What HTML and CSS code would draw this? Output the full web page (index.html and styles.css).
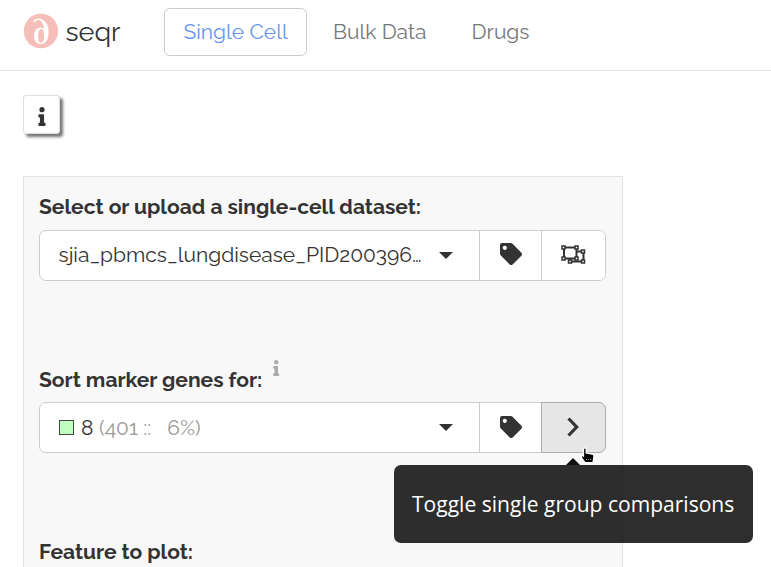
FILE: index.html
```
<!DOCTYPE html>
<html lang="en">
<head>
<meta charset="utf-8">
<title>seqr</title>
<link rel="stylesheet" href="styles.css">
</head>
<body>
<svg class="defs" width="0" height="0">
  <symbol id="info" viewBox="0 0 192 512"><path d="M20 424.229h20V279.771H20c-11.046 0-20-8.954-20-20V212c0-11.046 8.954-20 20-20h112c11.046 0 20 8.954 20 20v212.229h20c11.046 0 20 8.954 20 20V492c0 11.046-8.954 20-20 20H20c-11.046 0-20-8.954-20-20v-47.771c0-11.046 8.954-20 20-20zM96 0C56.235 0 24 32.235 24 72s32.235 72 72 72 72-32.235 72-72S135.764 0 96 0z"/></symbol>
  <symbol id="tag" viewBox="0 0 512 512"><path d="M0 252.118V48C0 21.49 21.49 0 48 0h204.118a48 48 0 0 1 33.941 14.059l211.882 211.882c18.745 18.745 18.745 49.137 0 67.882L293.823 497.941c-18.745 18.745-49.137 18.745-67.882 0L14.059 286.059A48 48 0 0 1 0 252.118zM112 64c-26.51 0-48 21.49-48 48s21.49 48 48 48 48-21.49 48-48-21.49-48-48-48z"/></symbol>
</svg>
<nav class="navbar">
  <a class="brand">
    <svg class="logo" viewBox="0 0 36 36"><circle cx="18" cy="18" r="17.2" fill="#f6beb8"/><path d="M10.2 8.500C11.500 5 16 4.800 19 6.400C24 9 26 14 25.500 20C25.200 27 22.500 31 17.800 31C13.500 31 11 27.500 11 23C11 18 13.700 14.500 17.500 14.500C19 14.500 20.200 15 21 16C20.500 11 18.500 7.300 15.500 7.100C14 7 13.200 7.900 12.300 8.800C11.500 9.600 10.300 9.500 10.200 8.500ZM18.200 16C16.200 16 15.300 18.500 15.300 23C15.300 27.500 16 29.700 18 29.700C20.300 29.700 21 27 21 22.500C21 18 20.300 16 18.200 16Z" fill="#fff" fill-rule="evenodd"/></svg>
    <span class="brand-name">seqr</span>
  </a>
  <a class="tab active"><span>Single Cell</span></a>
  <a class="tab bulk"><span>Bulk Data</span></a>
  <a class="tab drugs"><span>Drugs</span></a>
</nav>
<main>
  <button class="info-btn"><svg width="8" height="19"><use href="#info"/></svg></button>
  <section class="panel">
    <div class="field">
      <label><span>Select or upload a single-cell dataset:</span></label>
      <div class="group">
        <div class="select"><span class="value">sjia_pbmcs_lungdisease_PID200396…</span><i class="caret"></i></div>
        <button class="addon"><svg width="22" height="22"><use href="#tag"/></svg></button>
        <button class="addon last"><svg class="line" width="25" height="19" viewBox="0 0 25 19" stroke-width="2"><path d="M3 2.500H15.500V13.500H3ZM15.500 6.500H22.500V16.500H9V13.500"/><g class="handles" stroke-width="1.500"><path d="M1 1H4V4H1ZM14 1H17V4H14ZM1 12H4V15H1ZM14 12H17V15H14ZM20.500 5H23.500V8H20.500ZM20.500 15H23.500V18H20.500ZM7.500 15H10.500V18H7.500Z"/></g></svg></button>
      </div>
    </div>
    <div class="field sort">
      <label><span>Sort marker genes for:</span><svg class="hint" width="6.500" height="16"><use href="#info"/></svg></label>
      <div class="group">
        <div class="select"><span class="swatch"></span><span class="eight">8</span><span class="muted">(401 ::</span><span class="muted pct">6%)</span><i class="caret"></i></div>
        <button class="addon"><svg width="22" height="22"><use href="#tag"/></svg></button>
        <button class="addon last hover"><svg class="line" width="12" height="20" viewBox="0 0 12 20" stroke-width="3.200"><path d="M1.500 1.500L9.700 10L1.500 18.500"/></svg></button>
        <div class="tooltip"><span>Toggle single group comparisons</span></div>
        <svg class="cursor" width="16" height="18" viewBox="0 0 16 18"><path d="M3.500 2C3.500 .6 6.200 .6 6.200 2V6L12.500 7.200C13.600 7.500 14 8.200 14 9.200L13 15.700H5L1.500 10.500C1 8.500 2.500 8 3.500 9Z" fill="#000" stroke="#fff" stroke-width="1.300"/><path d="M6 12.500H12" stroke="#999" stroke-dasharray="1 1"/></svg>
      </div>
    </div>
    <div class="field">
      <label><span>Feature to plot:</span></label>
    </div>
  </section>
</main>
</body>
</html>
```
FILE: styles.css
```
* { box-sizing: border-box; }
body { margin: 0; height: 567px; overflow: hidden; background: #fff; color: #333; font: 21px/30px Raleway, Lato, sans-serif; }
span { white-space: pre; }
svg { display: block; flex: none; fill: #333; }
.defs { position: absolute; }
.navbar { display: flex; align-items: flex-start; height: 71px; padding: 8px 0 0 23px; border-bottom: 1px solid #e2e2e2; }
.brand { display: flex; width: 141px; height: 48px; align-items: center; }
.logo { width: 36px; height: 36px; margin-top: -2px; }
.brand-name { margin-left: 6.500px; font-size: 27px; }
.tab { height: 48px; padding: 8px 0 0 18px; border: 1px solid transparent; color: #777; }
.active { width: 143px; padding-left: 18.500px; border-color: #ccc; border-radius: 6px; color: #6495ed; }
.bulk { width: 138.500px; margin-left: 7px; }
.info-btn { display: flex; align-items: center; justify-content: center; width: 37px; height: 39px; margin: 24px 0 0 23px; padding: 3px 0 0; background: #fff; border: 1px solid #ddd; border-radius: 3px; box-shadow: 3px 3px 3px #777; }
.panel { width: 600px; height: 391px; margin: 42px 0 0 23px; padding: 15px 15px 0; background: #f8f8f8; border: 1px solid #e3e3e3; border-bottom: 0; }
.field { height: 173px; }
.field:last-child { height: 30px; }
.sort { height: 172px; }
.sort label { height: 37px; }
.sort .select { padding-bottom: 0; }
.sort .addon { padding-bottom: 2px; }
label { display: flex; height: 38px; font-weight: 700; }
.hint { margin: -5px 0 0 11px; fill: #aaa; }
.group { position: relative; display: flex; width: 567px; height: 51px; border: 1px solid #ccc; border-radius: 7px; background: #fff; }
.select { display: flex; align-items: center; width: 439px; padding: 0 0 1px 18.500px; }
.caret { margin: 0 26.500px 0 auto; border: solid transparent; border-width: 7px 7px 0; border-top-color: #333; }
.sort .caret { margin-bottom: 1px; }
.addon { display: flex; align-items: center; justify-content: center; width: 62px; padding: 0 0 3px; background: #fff; border: 0; border-left: 1px solid #ccc; }
.last { width: 64px; padding-right: 1px; border-radius: 0 6px 6px 0; }
.sort .hover { width: 65px; height: 51px; margin: -1px -1px 0 0; padding: 0 1px 1px 0; background: #e6e6e6; border: 1px solid #adadad; border-radius: 0 7px 7px 0; }
.line { fill: none; stroke: #333; }
.handles { fill: #fff; }
.swatch { width: 15px; height: 15px; margin-left: .5px; background: #bfffbf; border: 1px solid #444; }
.eight { width: 18px; margin-left: 7px; }
.muted { color: #999; }
.pct { margin-left: 16px; }
.tooltip { position: absolute; left: 354px; top: 62px; width: 359px; height: 78px; padding: 24px 0 0 18px; border-radius: 7px; background: rgba(0,0,0,.82); color: #fff; font: 21.060px/30px "Open Sans", sans-serif; }
.tooltip::before { content: ""; position: absolute; left: 172px; top: -7px; border: solid transparent; border-width: 0 7px 7px; border-bottom-color: #111; }
.cursor { position: absolute; left: 540px; top: 44px; }
```
